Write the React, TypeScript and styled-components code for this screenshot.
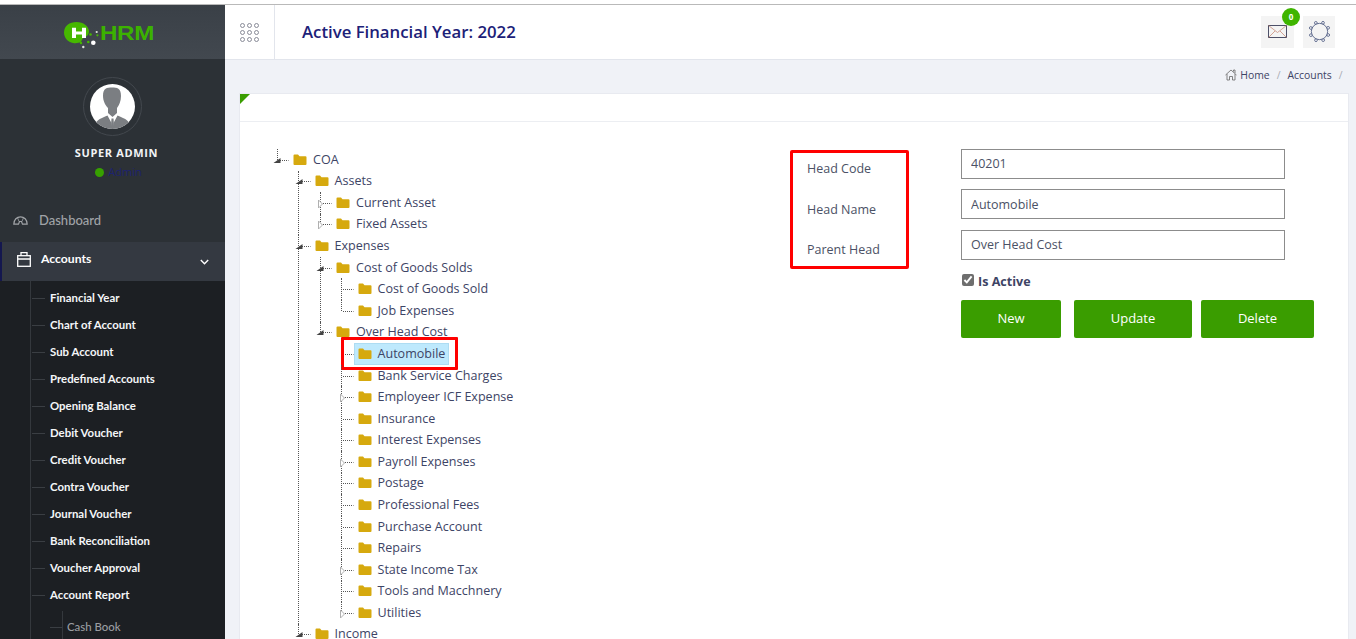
import React from "react";
import styled, { createGlobalStyle } from "styled-components";

const Global = createGlobalStyle`
  html, body { margin: 0; padding: 0; height: 100%; overflow: hidden; background: #fff; }
  * { box-sizing: border-box; }
  body { font-family: "Open Sans", "Liberation Sans", sans-serif; }
`;

const Page = styled.div`
  height: 639px;
  display: flex;
  flex-direction: column;
  overflow: hidden;
`;
const TopStrip = styled.div`
  height: 5px;
  flex: none;
  background: #fff;
  border-bottom: 1px solid #b9b9b9;
`;
const Shell = styled.div`
  flex: 1;
  min-height: 0;
  display: flex;
`;

/* Sidebar */
const Sidebar = styled.aside`
  width: 225px;
  flex: none;
  background: #2c3136;
  display: flex;
  flex-direction: column;
  overflow: hidden;
`;
const LogoBar = styled.div`
  height: 54px;
  flex: none;
  background: linear-gradient(#3a4047, #42484f);
  display: flex;
  align-items: flex-start;
  padding: 16px 0 0 64px;
`;
const LogoText = styled.span`
  font: bold 19.5px/21px "Liberation Sans", Arial, sans-serif;
  color: #3cb200;
  width: 52px;
  margin-top: 2px;
  transform: scaleX(1.24);
  transform-origin: left center;
  letter-spacing: -0.3px;
`;
const Profile = styled.div`
  height: 139px;
  flex: none;
  display: flex;
  flex-direction: column;
  align-items: center;
  padding-top: 18px;
`;
const AvatarRing = styled.div`
  width: 59px;
  height: 59px;
  border-radius: 50%;
  border: 1px solid #43484e;
  display: flex;
  align-items: center;
  justify-content: center;
`;
const UserName = styled.div`
  margin: 9px 0 0 8px;
  font: 700 11px/16px "Open Sans", sans-serif;
  letter-spacing: 0.65px;
  color: #f2f4f6;
`;
const Status = styled.div`
  margin: 3px 0 0 12px;
  display: flex;
  align-items: center;
  gap: 4px;
  font: 11px/16px "Open Sans", sans-serif;
  color: #1d2270;
`;
const Dot = styled.span`
  width: 9px;
  height: 9px;
  border-radius: 50%;
  background: #37a000;
`;
const NavItem = styled.div<{ $active?: boolean }>`
  display: flex;
  align-items: center;
  flex: none;
  height: ${(p) => (p.$active ? "39px" : "44px")};
  padding: 0 15px ${(p) => (p.$active ? "5px" : "0")} ${(p) => (p.$active ? "15px" : "13px")};
  background: ${(p) => (p.$active ? "#343941" : "transparent")};
  border-left: ${(p) => (p.$active ? "2px solid #14174f" : "none")};
  color: ${(p) => (p.$active ? "#fff" : "#a0a3a7")};
  font: ${(p) => (p.$active ? "700 12.2px" : "500 13px")}/20px Lato, sans-serif;
`;
const NavLabel = styled.span<{ $gap: number }>`
  margin-left: ${(p) => p.$gap}px;
  flex: 1;
`;
const ChevronWrap = styled.span`
  display: flex;
  margin: 5px 1px 0 0;
`;
const SubMenu = styled.ul`
  flex: 1;
  margin: 0;
  padding: 3.5px 0 0 30px;
  list-style: none;
  background: #1c1f23;
  position: relative;
  &::before {
    content: "";
    position: absolute;
    left: 30px;
    top: 0;
    bottom: 0;
    width: 1px;
    background: #34383d;
  }
`;
const SubItem = styled.li`
  height: 27px;
  display: flex;
  align-items: center;
  padding-left: 2px;
  color: #f4f6f8;
  font: 700 11.4px/16px Lato, sans-serif;
  &::before {
    content: "";
    width: 13px;
    height: 1px;
    background: #3a3e43;
    margin-right: 5px;
  }
`;
const SubSub = styled.ul`
  margin: 0;
  padding: 5px 0 0 18px;
  list-style: none;
  position: relative;
  &::before {
    content: "";
    position: absolute;
    left: 32px;
    top: 2px;
    bottom: 0;
    width: 1px;
    background: #34383d;
  }
`;
const SubSubItem = styled(SubItem)`
  color: #9a9da1;
  font-weight: 500;
  font-size: 11.4px;
  &::before { margin-right: 4px; }
`;

/* Main */
const Main = styled.main`
  flex: 1;
  min-width: 0;
  background: #f0f2f7;
  display: flex;
  flex-direction: column;
  overflow: hidden;
`;
const Header = styled.header`
  height: 55px;
  flex: none;
  background: #fff;
  border-bottom: 1px solid #e2e5ec;
  display: flex;
  align-items: center;
`;
const GridCell = styled.div`
  width: 50px;
  height: 100%;
  border-right: 1px solid #e2e5ec;
  display: flex;
  align-items: center;
  justify-content: center;
  padding-right: 1px;
`;
const Title = styled.h1`
  margin: 0 0 0 27px;
  flex: 1;
  font: 600 16.75px/22px "Open Sans", sans-serif;
  color: #1c2178;
`;
const IconTile = styled.div`
  position: relative;
  width: 33px;
  height: 32px;
  background: #f4f4f4;
  display: flex;
  align-items: center;
  justify-content: center;
  margin-right: 9px;
  margin-top: -1px;
  &:last-child { margin-right: 21px; width: 32px; }
`;
const Badge = styled.span`
  position: absolute;
  top: -8px;
  right: -6px;
  width: 18px;
  height: 18px;
  border-radius: 50%;
  background: #3fb500;
  color: #fff;
  font: 700 8px/17px "Open Sans", sans-serif;
  text-align: center;
`;
const Crumbs = styled.nav`
  height: 33px;
  flex: none;
  display: flex;
  align-items: center;
  justify-content: flex-end;
  padding: 0 6.5px 4px 0;
  font: 10.4px/16px "Open Sans", sans-serif;
  color: #3d4465;
`;
const CrumbSep = styled.span`
  color: #a9adb5;
  margin: 0 7px;
`;
const Card = styled.section`
  flex: 1;
  margin: 0 7px 0 14px;
  background: #fff;
  border: 1px solid #e8eaf0;
  border-bottom: none;
  position: relative;
  overflow: hidden;
  &::before {
    content: "";
    position: absolute;
    left: 0;
    top: 0;
    border-style: solid;
    border-width: 10px 10px 0 0;
    border-color: #3a9d00 transparent transparent transparent;
  }
`;
const CardHead = styled.div`
  height: 28px;
  border-bottom: 1px solid #eceef2;
`;
const CardBody = styled.div`
  display: flex;
  padding: 26.95px 0 0 33px;
  align-items: flex-start;
`;

/* Tree */
const TreePanel = styled.div`
  width: 517px;
  flex: none;
`;
const TreeList = styled.ul<{ $nested?: boolean }>`
  list-style: none;
  margin: 0;
  padding: 0 0 0 ${(p) => (p.$nested ? "21.5px" : "0")};
`;
const TreeItem = styled.li<{ $last?: boolean }>`
  position: relative;
  &::before {
    content: "";
    position: absolute;
    left: 3.5px;
    top: 0;
    height: ${(p) => (p.$last ? "10.8px" : "100%")};
    border-left: 1px dotted #555;
  }
`;
const TreeRow = styled.div`
  height: 21.58px;
  display: flex;
  align-items: center;
  position: relative;
`;
const Toggle = styled.svg`
  width: 16px;
  height: 20px;
  flex: none;
  position: relative;
`;
const Anchor = styled.a<{ $selected?: boolean }>`
  display: flex;
  align-items: center;
  height: 22px;
  padding: 0 4px 0 4px;
  background: ${(p) => (p.$selected ? "#bee9fd" : "transparent")};
  box-shadow: ${(p) => (p.$selected ? "inset 0 0 0 1px #aedcf2" : "none")};
  font: 12.55px/22px "Open Sans", sans-serif;
  color: #3d4465;
  white-space: nowrap;
`;
const FolderIcon = styled.svg`
  width: 14px;
  height: 12px;
  margin-right: 6px;
  flex: none;
`;
const RedMark = styled.span`
  position: absolute;
  left: 3.5px;
  top: -6px;
  width: 117px;
  height: 33px;
  border: 3px solid #f00;
  border-radius: 1px;
  pointer-events: none;
`;

/* Form */
const LabelBox = styled.div`
  width: 119px;
  height: 119px;
  margin-top: 1.1px;
  flex: none;
  border: 3px solid #f00;
  border-radius: 2px;
  display: flex;
  flex-direction: column;
  gap: 10.5px;
  padding: 1px 0 0 14px;
`;
const FieldLabel = styled.label`
  height: 30px;
  display: flex;
  align-items: center;
  font: 12.5px/18px "Open Sans", sans-serif;
  color: #4b5165;
`;
const FormCol = styled.div`
  margin-left: 52px;
  width: 354px;
  flex: none;
  display: flex;
  flex-direction: column;
`;
const TextInput = styled.input`
  width: 324px;
  height: 30px;
  margin-bottom: 10.5px;
  padding: 0 9px;
  border: 1px solid #8c8c8c;
  border-radius: 0;
  outline: none;
  font: 12.5px "Open Sans", sans-serif;
  color: #4b5165;
`;
const CheckRow = styled.label`
  margin-top: 2.5px;
  height: 18px;
  display: flex;
  align-items: center;
  gap: 4px;
  font: 700 12.55px/18px "Open Sans", sans-serif;
  color: #3d4465;
`;
const Check = styled.input`
  width: 12px;
  height: 12px;
  margin: 0 0 3px 1px;
  accent-color: #6e6e6e;
`;
const ButtonRow = styled.div`
  margin-top: 9px;
  display: flex;
`;
const ActionButton = styled.button<{ $w: number; $ml?: number }>`
  width: ${(p) => p.$w}px;
  height: 38px;
  margin-left: ${(p) => p.$ml ?? 0}px;
  padding: 0 0 2px;
  border: none;
  border-radius: 2px;
  background: #3a9d00;
  color: #fff;
  font: 500 13px "Open Sans", sans-serif;
`;

type Node = { t: string; s?: "open" | "closed"; sel?: boolean; c?: Node[] };
const tree: Node = {
  t: "COA",
  s: "open",
  c: [
    {
      t: "Assets",
      s: "open",
      c: [
        { t: "Current Asset", s: "closed" },
        { t: "Fixed Assets", s: "closed" },
      ],
    },
    {
      t: "Expenses",
      s: "open",
      c: [
        {
          t: "Cost of Goods Solds",
          s: "open",
          c: [{ t: "Cost of Goods Sold" }, { t: "Job Expenses" }],
        },
        {
          t: "Over Head Cost",
          s: "open",
          c: [
            { t: "Automobile", sel: true },
            { t: "Bank Service Charges" },
            { t: "Employeer ICF Expense", s: "closed" },
            { t: "Insurance" },
            { t: "Interest Expenses" },
            { t: "Payroll Expenses", s: "closed" },
            { t: "Postage" },
            { t: "Professional Fees" },
            { t: "Purchase Account" },
            { t: "Repairs" },
            { t: "State Income Tax", s: "closed" },
            { t: "Tools and Macchnery" },
            { t: "Utilities", s: "closed" },
          ],
        },
      ],
    },
    { t: "Income", s: "open" },
  ],
};

const Folder = () => (
  <FolderIcon viewBox="0 0 14 12">
    <path d="M0.5 1.5 Q0.5 0.6 1.5 0.6 H5 L6.5 2.2 H12.5 Q13.5 2.2 13.5 3.2 V10 Q13.5 11 12.5 11 H1.5 Q0.5 11 0.5 10 Z" fill="#d6a90e" />
  </FolderIcon>
);

const Tog = ({ s }: { s?: Node["s"] }) => (
  <Toggle viewBox="0 0 16 20">
    <line x1="5" x2="15.5" y1="10.5" y2="10.5" stroke="#555" strokeDasharray="1 1" />
    {s === "open" && <path d="M0.5 13 L7.5 13 L7.5 8 Z" fill="#444" />}
    {s === "closed" && <path d="M2.5 7 L2.5 15 L6.5 11 Z" fill="#fff" stroke="#b0b0b0" />}
  </Toggle>
);

const TreeNode = ({ n, last }: { n: Node; last?: boolean }) => (
  <TreeItem $last={last}>
    <TreeRow>
      <Tog s={n.s} />
      <Anchor $selected={n.sel}>
        <Folder />
        {n.t}
      </Anchor>
      {n.sel && <RedMark />}
    </TreeRow>
    {n.c && (
      <TreeList $nested>
        {n.c.map((k, i) => (
          <TreeNode key={k.t} n={k} last={i === n.c!.length - 1} />
        ))}
      </TreeList>
    )}
  </TreeItem>
);

const subItems = [
  "Financial Year",
  "Chart of Account",
  "Sub Account",
  "Predefined Accounts",
  "Opening Balance",
  "Debit Voucher",
  "Credit Voucher",
  "Contra Voucher",
  "Journal Voucher",
  "Bank Reconciliation",
  "Voucher Approval",
  "Account Report",
];

const LogoMark = () => (
  <svg width="36" height="28" viewBox="0 0 36 28" style={{ flex: "none" }}>
    <path d="M0 11.500 C0 5 5.500 1 12.500 1 C19.500 1 24.500 5 25 10 C25 12 24 14 23 15 C20 15.500 18 18 17 21 C15 22 12 22.500 9 22 C4 21 0 17 0 11.500 Z" fill="#46b800" />
    <path d="M8 6.700 H12 V10.500 H18 V6.700 H22 V17 H18 V13.500 H12 V17 H8 Z" fill="#fff" />
    <g fill="#dfe6df">
      <circle cx="32.700" cy="11" r="1.100" />
      <circle cx="33.400" cy="14.300" r="1.100" fill="#46b800" />
      <circle cx="26.500" cy="13.500" r="1.300" fill="#46b800" />
      <circle cx="29.300" cy="21.700" r="2.300" fill="#fff" />
      <circle cx="24.300" cy="21" r="1.300" fill="#46b800" />
      <circle cx="17" cy="22" r="1.200" fill="#46b800" />
      <circle cx="19.300" cy="26" r="1.200" />
    </g>
  </svg>
);

const Avatar = () => (
  <svg width="45" height="45" viewBox="0 0 45 45">
    <defs>
      <clipPath id="av">
        <circle cx="22.500" cy="22.500" r="22.500" />
      </clipPath>
    </defs>
    <circle cx="22.500" cy="22.500" r="22.500" fill="#fff" />
    <g clipPath="url(#av)" fill="#7b7e82">
      <path d="M13 12 C13 4 17 3.500 22 3.500 C27 3.500 31 4 31 12 C31 17 29 21.500 27 24 V29 L22.500 33 L18 29 V24 C15.500 21.500 13 17 13 12 Z" />
      <path d="M4 46 C4 37 9 35 17.500 31.500 L21.500 39 L21 46 Z" />
      <path d="M41 46 C41 37 36 35 27.500 31.500 L23.500 39 L24 46 Z" />
      <path d="M21.500 34.500 H23.500 L24.300 46 H20.700 Z" />
    </g>
  </svg>
);

const GridIcon = () => (
  <svg width="19" height="19" viewBox="0 0 19 19" fill="none" stroke="#7d7f8c" strokeWidth="0.9">
    {[2.5, 9.5, 16.5].flatMap((y) =>
      [2.5, 9.5, 16.5].map((x) => <circle key={`${x}-${y}`} cx={x} cy={y} r="2" />)
    )}
  </svg>
);

const Envelope = () => (
  <svg width="19" height="13" viewBox="0 0 19 13" fill="none" stroke="#4d5068" strokeWidth="1">
    <rect x="0.500" y="0.500" width="18" height="12" />
    <path d="M0.500 0.500 L9.500 7.500 L18.500 0.500 M0.500 12.500 L7 6 M18.500 12.500 L12 6" stroke="#c98f7c" strokeWidth="0.8" />
  </svg>
);

const Sun = () => (
  <svg width="23" height="23" viewBox="0 0 24 24" fill="none" stroke="#4d5a80" strokeWidth="0.9">
    <circle cx="12" cy="12" r="8.500" />
    {[22, 67, 112, 157, 202, 247, 292, 337].map((a) => (
      <circle
        key={a}
        cx={12 + 9.8 * Math.cos((a * Math.PI) / 180)}
        cy={12 + 9.8 * Math.sin((a * Math.PI) / 180)}
        r="1.400"
        fill="#fff"
      />
    ))}
  </svg>
);

const HomeIcon = () => (
  <svg width="12" height="12" viewBox="0 0 12 12" fill="none" stroke="#666" strokeWidth="0.8" style={{ marginRight: 3 }}>
    <path d="M0.500 6 L6 1 L11.500 6 M2 5 V11 H4.500 V7.500 H7.500 V11 H10 V5 M8.500 2.500 V1 H10 V4" />
  </svg>
);

const Gauge = () => (
  <svg width="15" height="9" viewBox="0 0 15 9" fill="none" stroke="#a0a3a7" strokeWidth="1.200">
    <path d="M0.800 8.200 C0.800 3.500 4 0.800 7.500 0.800 C11 0.800 14.200 3.500 14.200 8.200 H9.500 L8.500 5.500 L6.500 5.500 L5.500 8.200 Z" />
    <path d="M4.500 1.500 L6 5.500 M10.500 1.500 L9 5.500" strokeWidth="0.800" />
  </svg>
);

const Briefcase = () => (
  <svg width="14" height="15" viewBox="0 0 14 15" fill="none" stroke="#fff" strokeWidth="1.300">
    <rect x="0.700" y="3.700" width="12.600" height="10.600" />
    <path d="M0.700 7 H13.300 M4 3.700 V0.700 H10 V3.700" />
  </svg>
);

const Chevron = () => (
  <svg width="9" height="6" viewBox="0 0 9 6" fill="none" stroke="#fff" strokeWidth="1.400">
    <path d="M0.800 1 L4.500 4.800 L8.200 1" />
  </svg>
);

export default function App() {
  return (
    <Page>
      <Global />
      <TopStrip />
      <Shell>
        <Sidebar>
          <LogoBar>
            <LogoMark />
            <LogoText>HRM</LogoText>
          </LogoBar>
          <Profile>
            <AvatarRing>
              <Avatar />
            </AvatarRing>
            <UserName>SUPER ADMIN</UserName>
            <Status>
              <Dot />
              Admin
            </Status>
          </Profile>
          <NavItem>
            <Gauge />
            <NavLabel $gap={11}>Dashboard</NavLabel>
          </NavItem>
          <NavItem $active>
            <Briefcase />
            <NavLabel $gap={10}>Accounts</NavLabel>
            <ChevronWrap>
              <Chevron />
            </ChevronWrap>
          </NavItem>
          <SubMenu>
            {subItems.map((s) => (
              <SubItem key={s}>{s}</SubItem>
            ))}
            <SubSub>
              <SubSubItem>Cash Book</SubSubItem>
            </SubSub>
          </SubMenu>
        </Sidebar>
        <Main>
          <Header>
            <GridCell>
              <GridIcon />
            </GridCell>
            <Title>Active Financial Year: 2022</Title>
            <IconTile>
              <Envelope />
              <Badge>0</Badge>
            </IconTile>
            <IconTile>
              <Sun />
            </IconTile>
          </Header>
          <Crumbs>
            <HomeIcon />
            Home
            <CrumbSep>/</CrumbSep>
            Accounts
            <CrumbSep>/</CrumbSep>
          </Crumbs>
          <Card>
            <CardHead />
            <CardBody>
              <TreePanel>
                <TreeList>
                  <TreeNode n={tree} last />
                </TreeList>
              </TreePanel>
              <LabelBox>
                <FieldLabel>Head Code</FieldLabel>
                <FieldLabel>Head Name</FieldLabel>
                <FieldLabel>Parent Head</FieldLabel>
              </LabelBox>
              <FormCol>
                <TextInput readOnly value="40201" />
                <TextInput readOnly value="Automobile" />
                <TextInput readOnly value="Over Head Cost" />
                <CheckRow>
                  <Check type="checkbox" checked readOnly />
                  Is Active
                </CheckRow>
                <ButtonRow>
                  <ActionButton $w={100}>New</ActionButton>
                  <ActionButton $w={118} $ml={13}>Update</ActionButton>
                  <ActionButton $w={113} $ml={9}>Delete</ActionButton>
                </ButtonRow>
              </FormCol>
            </CardBody>
          </Card>
        </Main>
      </Shell>
    </Page>
  );
}
